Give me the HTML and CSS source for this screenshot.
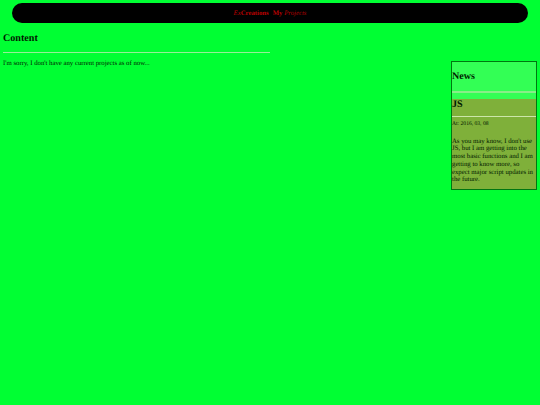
FILE: index.html
```html
<!DOCTYPE html>
<html lang="en">
<head>
  <meta charset="UTF-8">
  <title>My Projects</title>
  <link rel="stylesheet" href="styles.css">
</head>
<body>
  <div class="topbar">
    <a href="#"><i>Ex</i><b>Creations</b></a>
    <a href="#" class="current"><b>My</b> <i>Projects</i></a>
  </div>

  <div class="page">
    <div class="content">
      <h2>Content</h2>
      <hr>
      <p>I'm sorry, I don't have any current projects as of now...</p>
    </div>

    <div class="news">
      <div class="news-head">
        <h2>News</h2>
        <hr>
      </div>
      <div class="news-item">
        <h3>JS</h3>
        <hr>
        <p class="date">At: 2016, 03, 08</p>
        <p>As you may know, I don't use JS, but I am getting into the most basic functions and I am getting to know more, so expect major script updates in the future.</p>
      </div>
    </div>
  </div>
</body>
</html>
```

FILE: styles.css
```css
body {
  margin: 0;
  padding: 0;
  background-color: #00ff33;
  color: #001a00;
  font-family: "Liberation Serif", "Times New Roman", serif;
  font-size: 6.75px;
  text-rendering: geometricPrecision;
}

a {
  color: #bb0000;
  text-decoration: none;
}

hr {
  margin: 0;
  border: none;
  border-top: 1px solid #99ee99;
}

.topbar {
  margin: 3px 12px 0;
  height: 20px;
  background-color: black;
  border-radius: 10px;
  display: flex;
  justify-content: center;
  align-items: center;
  gap: 4px;
}

.page {
  display: flex;
  justify-content: space-between;
  align-items: flex-start;
  padding: 0 3px;
}

.content {
  width: 267px;
}

.content h2 {
  margin: 9px 0 7px;
  font-size: 10.1px;
  line-height: 13px;
}

.content p {
  margin: 7px 0 0;
  line-height: 8px;
}

.news {
  margin-top: 38px;
  width: 84px;
  border: 1px solid #007711;
  background-color: #33ff55;
}

.news-head h2 {
  margin: 0;
  padding-top: 8px;
  font-size: 10.1px;
  line-height: 13px;
  height: 21px;
}

.news-head {
  height: 37px;
}

.news-head hr {
  border-top: 2px solid #88ee88;
}

.news-item {
  background-color: #7fb03a;
  padding-bottom: 5px;
}

.news-item h3 {
  margin: 0;
  font-size: 10.1px;
  line-height: 11px;
  height: 17px;
}

.news-item hr {
  border-top: 1px solid #cce6aa;
}

.news-item p {
  margin: 0;
  line-height: 7.7px;
}

.news-item .date {
  font-size: 5.6px;
  margin: 4px 0 9px;
}
```
